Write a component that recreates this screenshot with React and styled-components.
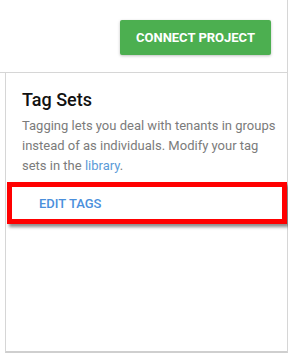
import React from "react";
import styled, { createGlobalStyle } from "styled-components";

const GlobalStyle = createGlobalStyle`
  html, body {
    margin: 0;
    padding: 0;
    background: #ffffff;
    font-family: Roboto, "Liberation Sans", Arial, sans-serif;
  }
`;

const Page = styled.div`
  width: 288px;
  height: 354px;
  display: flex;
  flex-direction: column;
  overflow: hidden;
`;

const Header = styled.div`
  box-sizing: border-box;
  height: 73px;
  display: flex;
  justify-content: flex-end;
  align-items: flex-start;
  padding: 20px 16px 0 0;
  border-right: 1px solid #d6d6d6;
  border-bottom: 1px solid #d6d6d6;
`;

const PrimaryButton = styled.button`
  height: 35px;
  width: 151px;
  padding: 0;
  border: none;
  border-radius: 2px;
  background: #4caf50;
  color: #ffffff;
  font-family: Roboto, "Liberation Sans", sans-serif;
  font-size: 13px;
  font-weight: 700;
  box-shadow: 0 1px 3px rgba(0, 0, 0, 0.25);
  cursor: pointer;
`;

const Panel = styled.div`
  box-sizing: border-box;
  margin-left: 5px;
  height: 280px;
  border-left: 1px solid #d6d6d6;
  border-right: 1px solid #d6d6d6;
  border-bottom: 2px solid #cfcfcf;
  padding-top: 15px;
`;

const Content = styled.div`
  padding: 0 8px 0 16px;
`;

const Title = styled.h2`
  margin: 0 0 4px;
  font-size: 18px;
  line-height: 24px;
  font-weight: 500;
  color: #111111;
`;

const Description = styled.p`
  margin: 0;
  font-size: 13px;
  line-height: 20px;
  color: #7b7b7b;
  white-space: nowrap;
`;

const Link = styled.a`
  color: #5b9bd8;
  text-decoration: none;
`;

const Highlight = styled.div`
  box-sizing: border-box;
  margin: 6px 0 0 1px;
  border: 5px solid #ff0000;
  padding: 0 11px;
  box-shadow: 2px 3px 3px rgba(0, 0, 0, 0.45);
`;

const TextButton = styled.button`
  height: 32px;
  padding: 0 16px;
  border: none;
  background: transparent;
  color: #4a8fdc;
  font-family: Roboto, "Liberation Sans", sans-serif;
  font-size: 13px;
  font-weight: 500;
  cursor: pointer;
`;

export default function App() {
  return (
    <>
      <GlobalStyle />
      <Page>
        <Header>
          <PrimaryButton>CONNECT PROJECT</PrimaryButton>
        </Header>
        <Panel>
          <Content>
            <Title>Tag Sets</Title>
            <Description>
              Tagging lets you deal with tenants in groups
              <br />
              instead of as individuals. Modify your tag
              <br />
              sets in the <Link href="#">library</Link>.
            </Description>
          </Content>
          <Highlight>
            <TextButton>EDIT TAGS</TextButton>
          </Highlight>
        </Panel>
      </Page>
    </>
  );
}
